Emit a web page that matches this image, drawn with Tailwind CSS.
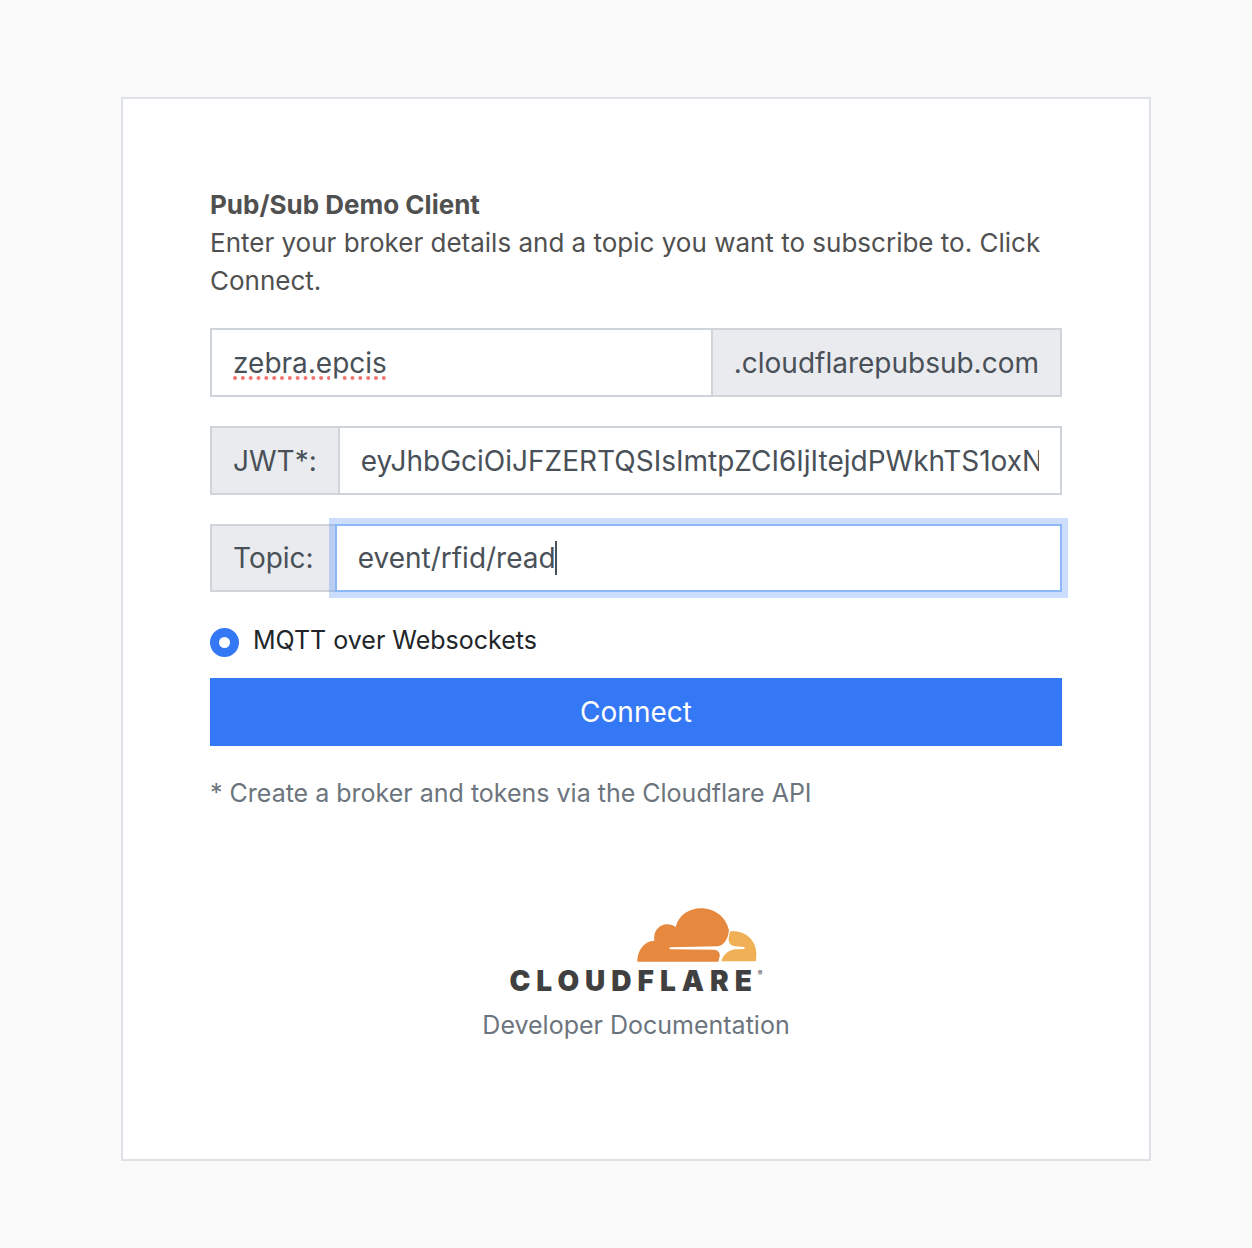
<!DOCTYPE html>
<html lang="en">
<head>
<meta charset="utf-8">
<meta name="viewport" content="width=device-width, initial-scale=1">
<title>Pub/Sub Demo Client</title>
<script src="https://cdn.jsdelivr.net/npm/@tailwindcss/browser@4"></script>
</head>
<body class="min-h-screen bg-[#fafafa] pt-[97px] pr-[101px] pb-[87px] pl-[121px] font-['Inter',sans-serif] text-[25px] leading-[38px] text-[#505050]">
<main class="border-2 border-[#dee2e6] bg-white px-[87px] pt-[87px] pb-[115px]">
  <form>
    <h1 class="text-[26px] leading-[38px] font-bold">Pub/Sub Demo Client</h1>
    <p class="text-[26px] leading-[38px]">Enter your broker details and a topic you want to subscribe to. Click Connect.</p>

    <div class="mt-7 flex flex-col gap-[29px] text-[28px] text-[#495057]">
      <div class="flex h-[69px]">
        <input id="broker" type="text" value="zebra.epcis" aria-label="Broker" class="min-w-0 flex-1 border-2 border-[#ced4da] bg-white px-[21px] underline decoration-[#f0776f] decoration-dotted decoration-4 underline-offset-4 outline-none">
        <label for="broker" class="flex items-center border-2 border-l-0 border-[#ced4da] bg-[#e9ebef] px-[21px]">.cloudflarepubsub.com</label>
      </div>
      <div class="flex h-[69px]">
        <label for="jwt" class="flex items-center border-2 border-r-0 border-[#ced4da] bg-[#e9ebef] px-[21px]">JWT*:</label>
        <input id="jwt" type="text" value="eyJhbGciOiJFZERTQSIsImtpZCI6IjItejdPWkhTS1oxNnRk" class="min-w-0 flex-1 border-2 border-[#ced4da] bg-white px-[21px] outline-none">
      </div>
      <div class="flex h-[68px]">
        <label for="topic" class="flex items-center border-2 border-r-0 border-[#ced4da] bg-[#e9ebef] px-[21px]">Topic:</label>
        <div class="relative flex min-w-0 flex-1">
          <input id="topic" type="text" value="event/rfid/read" class="w-full border-2 border-[#8cb8f8] bg-white px-[21px] ring-6 ring-[#3478f6]/25 outline-none">
          <span class="absolute top-[17px] left-[220px] h-[34px] w-[2px] bg-[#495057]"></span>
        </div>
      </div>
    </div>

    <label class="mt-[29px] flex items-center gap-[14px] text-[#212529]">
      <input type="radio" name="transport" checked class="mt-1 size-[29px] appearance-none rounded-full border-9 border-[#3478f6] bg-white">
      MQTT over Websockets
    </label>
    <button type="submit" class="mt-[19px] h-[68px] w-full bg-[#3478f6] text-[28px] text-white">Connect</button>
    <p class="mt-7 text-[#6c757d]">* Create a broker and tokens via the Cloudflare API</p>
  </form>

  <footer class="mt-[95px] flex flex-col items-center text-[#6c757d]">
    <div class="flex flex-col">
      <svg class="mr-[5px] h-[56px] w-[122px] self-end" viewBox="438 50 364 168" aria-hidden="true">
        <path fill="#e6883e" d="M441 214C441 180 461 152 492 151C488 121 508 102 530 102C541 102 549 105 556 110C566 73 597 54 632 54C674 54 707 80 716 120C713 148 700 166 682 168L540 171C536 171 536 177 540 177L672 178C684 179 690 188 688 198L684 214Z"/>
        <path fill="#f0b055" d="M720 123C765 118 798 150 798 190C798 200 797 208 796 213L693 213C700 190 716 178 738 177L760 176C765 175 765 171 760 170L735 168C715 166 710 150 720 123Z"/>
      </svg>
      <div class="mt-1 flex items-start text-[#404041]">
        <span class="text-[28px] leading-[28px] font-black tracking-[6px]">CLOUDFLARE</span>
        <span class="text-[7px] leading-[14px]">®</span>
      </div>
    </div>
    <a href="#" class="mt-[11px]">Developer Documentation</a>
  </footer>
</main>
</body>
</html>
